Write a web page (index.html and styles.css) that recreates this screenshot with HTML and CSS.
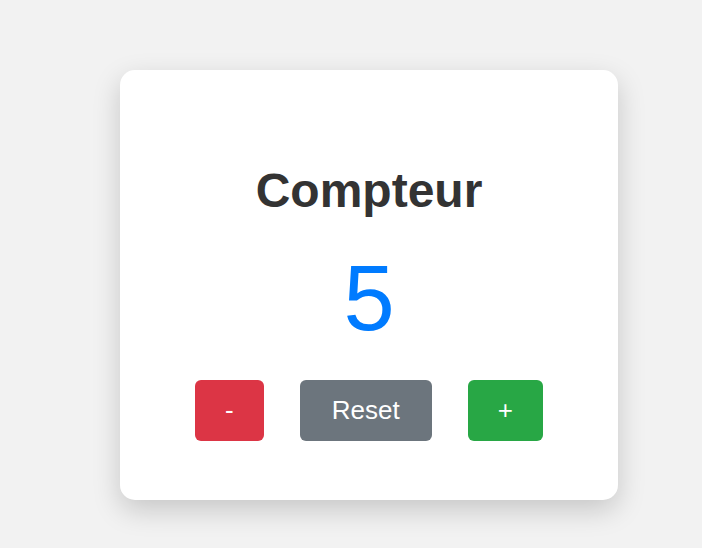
FILE: index.html
```html
<!DOCTYPE html>
<html lang="fr">
<head>
<meta charset="utf-8">
<title>Compteur</title>
<link rel="stylesheet" href="styles.css">
</head>
<body>
<div class="page">
  <div class="card">
    <h1 class="title">Compteur</h1>
    <div class="count">5</div>
    <div class="actions">
      <button class="btn btn-minus">-</button>
      <button class="btn btn-reset">Reset</button>
      <button class="btn btn-plus">+</button>
    </div>
  </div>
</div>
</body>
</html>
```
FILE: styles.css
```css
html, body {
  margin: 0;
  padding: 0;
  background: #f2f2f2;
  font-family: "Liberation Sans", Arial, sans-serif;
}
.page {
  box-sizing: border-box;
  min-height: 100vh;
  padding: 70px 0 0 120px;
}
.card {
  box-sizing: border-box;
  width: 498px;
  height: 430px;
  background: #ffffff;
  border-radius: 15px;
  box-shadow: 0 10px 28px rgba(0, 0, 0, 0.18);
  padding: 93px 0 0 0;
  text-align: center;
}
.title {
  margin: 0 0 27px 0;
  font-size: 48px;
  line-height: 55px;
  font-weight: bold;
  color: #333333;
}
.count {
  margin: 0 0 29px 0;
  font-size: 92px;
  line-height: 106px;
  color: #007bff;
}
.actions {
  display: flex;
  justify-content: center;
  gap: 36px;
}
.btn {
  border: none;
  border-radius: 6px;
  padding: 15px 30px;
  font-family: "Liberation Sans", Arial, sans-serif;
  font-size: 26px;
  line-height: 31px;
  color: #ffffff;
  cursor: pointer;
}
.btn-minus { background: #dc3545; }
.btn-reset { background: #6c757d; padding: 15px 32px; }
.btn-plus { background: #28a745; }
```
